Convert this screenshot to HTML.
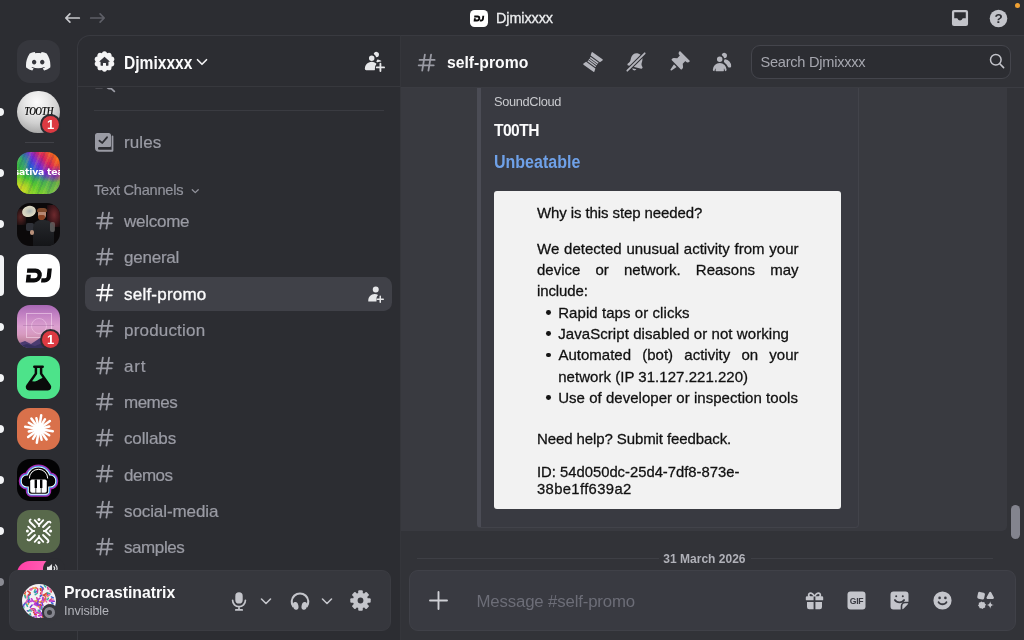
<!DOCTYPE html>
<html lang="en">
<head>
<meta charset="utf-8">
<title>Djmixxxx</title>
<style>
*{box-sizing:border-box;margin:0;padding:0}
html,body{width:1024px;height:640px;overflow:hidden;background:#2c2d32;font-family:"Liberation Sans",sans-serif;color:#dfe0e2}
.abs{position:absolute}
#app{position:relative;width:1024px;height:640px;overflow:hidden;will-change:transform}
/* title bar */
#title{position:absolute;left:0;top:0;width:1024px;height:36px}
#title .name{position:absolute;left:496px;top:0;line-height:36px;font-size:14.400px;color:#ecedef;letter-spacing:-0.080px;white-space:nowrap;-webkit-text-stroke:0.300px #ecedef}
#title .dj{position:absolute;left:470px;top:9.500px;width:17.500px;height:17px;border-radius:4.500px;background:#fff}
/* panels */
#side{position:absolute;left:77px;top:35px;width:324px;height:620px;border:1px solid #393a40;border-right:none;border-top-left-radius:13px;background:#2c2d32;overflow:hidden}
#chat{position:absolute;left:400px;top:35px;width:624px;height:605px;background:#323338;border-top:1px solid #393a40;border-left:1px solid #35363b;overflow:hidden}
#chathead{z-index:5;position:absolute;left:-1px;top:0;width:625px;height:51.500px;background:#313237;border-bottom:1px solid #3b3c42}
#sidehead{position:absolute;left:0;top:0;width:323px;height:51px;border-bottom:1px solid #37383d}
.chan{position:absolute;left:47px;font-size:17px;color:#9b9ca5;white-space:nowrap;letter-spacing:-0.1px}

/* guild list */
.pill{position:absolute;left:0;width:4px;height:8px;background:#f2f3f5;border-radius:0 4px 4px 0}
.gi{position:absolute;left:17.300px;width:42.700px;height:42.700px;border-radius:13px;overflow:hidden}
.badge{position:absolute;width:21.600px;height:21.600px;border-radius:50%;background:#2c2d32}
.badge i{position:absolute;left:2px;top:2px;width:17.600px;height:17.600px;border-radius:50%;background:#dc3a42;color:#fff;font:bold 13px/17.600px "Liberation Sans",sans-serif;text-align:center;font-style:normal}

/* sidebar */
.row{position:absolute;left:8px;width:306px;height:34px;border-radius:8.500px}
.row svg.h{position:absolute;left:8px;top:5.600px}
.row span{position:absolute;left:38px;top:1px;line-height:34px;font-size:17px;color:#9a9ba4;white-space:nowrap;-webkit-text-stroke:0.220px #9a9ba4}
.row.sel{background:#404148;box-shadow:-1px 0 0 #404148}
.row.sel span{color:#fbfbfc;-webkit-text-stroke:0.350px #fbfbfc}

/* chat */
#hover{position:absolute;left:-1px;top:51.500px;width:606.500px;height:443.500px;background:#393a40;border-radius:0 0 5px 0}
#embed{position:absolute;left:76px;top:40px;width:382px;height:451.500px;background:#393a41;border:1px solid #42434a;border-left:4.500px solid #4b4c55;border-radius:4px}
#card{position:absolute;left:93px;top:154.500px;width:347px;height:318.500px;background:#f2f2f2;border-radius:3px;color:#111;-webkit-text-stroke:0.280px #111;font-size:15px;overflow:hidden}
#card div{position:absolute;white-space:nowrap;line-height:21.330px;height:21.330px;letter-spacing:-0.100px}
#card .j{width:261.500px;left:43px;text-align:justify;text-align-last:justify;letter-spacing:0}
#card .b{left:64.200px;letter-spacing:0.070px}
#card .jb{width:240px;left:64.500px;text-align:justify;text-align-last:justify;letter-spacing:0}
#card .dot{left:52.300px;width:4.800px;height:4.800px;border-radius:50%;background:#151515}
</style>
</head>
<body>
<div id="app">
  <div id="title">
    <svg class="abs" style="left:64px;top:11px" width="17" height="14" viewBox="0 0 17 14"><path fill="none" stroke="#c8c9cd" stroke-width="1.700" stroke-linecap="round" stroke-linejoin="round" d="M15.300 7H2M5.900 2.900 1.800 7l4.100 4.100"/></svg>
    <svg class="abs" style="left:89px;top:11px" width="17" height="14" viewBox="0 0 17 14"><path fill="none" stroke="#5e5f67" stroke-width="1.700" stroke-linecap="round" stroke-linejoin="round" d="M1.700 7H15M11.100 2.900 15.200 7l-4.100 4.100"/></svg>
    <div class="dj"><svg class="abs" style="left:3px;top:5px" width="12" height="7" viewBox="-2 -1.500 30 17"><g transform="skewX(-6) translate(1.300 0)" fill="none" stroke="#0b0b0c" stroke-width="4.600"><path d="M0 2.100H8.200A4.900 4.900 0 0 1 8.200 11.900H2.100V6.300"/><path d="M22.400 0V8.300A3.600 3.600 0 0 1 18.800 11.900H15.200"/></g></svg></div>
    <div class="name">Djmixxxx</div>
    <!-- inbox -->
    <svg class="abs" style="left:951px;top:9px" width="18" height="18" viewBox="0 0 19 19"><path fill="#c3c4ca" fill-rule="evenodd" d="M3.200 1h12.600A2.200 2.200 0 0 1 18 3.200v12.600a2.200 2.200 0 0 1-2.200 2.200H3.200A2.200 2.200 0 0 1 1 15.800V3.200A2.200 2.200 0 0 1 3.200 1ZM3.400 3.400v6.400h2.900c.4 0 .7.200.8.600.3 1 1.200 1.800 2.400 1.800s2.100-.8 2.400-1.800c.1-.4.400-.6.800-.6h2.900V3.400Z"/></svg>
    <!-- help -->
    <svg class="abs" style="left:989px;top:9px" width="19" height="19" viewBox="0 0 19 19"><circle cx="9.500" cy="9.500" r="8.800" fill="#c3c4ca"/><text x="9.500" y="14.300" text-anchor="middle" font-family="Liberation Sans, sans-serif" font-weight="bold" font-size="13.500" fill="#2c2d32">?</text></svg>
    <div class="abs" style="left:1015px;top:3px;width:5px;height:5px;border-radius:50%;background:#f0a032"></div>
  </div>

  <div id="guilds">
    <!-- pills -->
    <div class="pill" style="top:108.10px"></div>
    <div class="pill" style="top:169.15px"></div>
    <div class="pill" style="top:220.30px"></div>
    <div class="pill" style="top:254.95px;height:41px"></div>
    <div class="pill" style="top:322.60px"></div>
    <div class="pill" style="top:373.75px"></div>
    <div class="pill" style="top:424.90px"></div>
    <div class="pill" style="top:476.05px"></div>
    <div class="pill" style="top:527.20px"></div>
    <div class="pill" style="top:578.35px;background:#8a8b93"></div>
    <!-- home -->
    <div class="gi" style="top:40px;background:#36373d">
      <svg class="abs" style="left:9.200px;top:9.300px" width="24.400" height="24.400" viewBox="0 0 24 24"><path fill="#f0f1f2" d="M20.317 4.3698a19.7913 19.7913 0 00-4.8851-1.5152.0741.0741 0 00-.0785.0371c-.211.3753-.4447.8648-.6083 1.2495-1.8447-.2762-3.68-.2762-5.4868 0-.1636-.3933-.4058-.8742-.6177-1.2495a.077.077 0 00-.0785-.037 19.7363 19.7363 0 00-4.8852 1.515.0699.0699 0 00-.0321.0277C.5334 9.0458-.319 13.5799.0992 18.0578a.0824.0824 0 00.0312.0561c2.0528 1.5076 4.0413 2.4228 5.9929 3.0294a.0777.0777 0 00.0842-.0276c.4616-.6304.8731-1.2952 1.226-1.9942a.076.076 0 00-.0416-.1057c-.6528-.2476-1.2743-.5495-1.8722-.8923a.077.077 0 01-.0076-.1277c.1258-.0943.2517-.1923.3718-.2914a.0743.0743 0 01.0776-.0105c3.9278 1.7933 8.18 1.7933 12.0614 0a.0739.0739 0 01.0785.0095c.1202.099.246.1981.3728.2924a.077.077 0 01-.0066.1276 12.2986 12.2986 0 01-1.873.8914.0766.0766 0 00-.0407.1067c.3604.698.7719 1.3628 1.225 1.9932a.076.076 0 00.0842.0286c1.961-.6067 3.9495-1.5219 6.0023-3.0294a.077.077 0 00.0313-.0552c.5004-5.177-.8382-9.6739-3.5485-13.6604a.061.061 0 00-.0312-.0286zM8.02 15.3312c-1.1825 0-2.1569-1.0857-2.1569-2.419 0-1.3332.9555-2.4189 2.157-2.4189 1.2108 0 2.1757 1.0952 2.1568 2.419 0 1.3332-.9555 2.4189-2.1569 2.4189zm7.9748 0c-1.1825 0-2.1569-1.0857-2.1569-2.419 0-1.3332.9554-2.4189 2.1569-2.4189 1.2108 0 2.1757 1.0952 2.1568 2.419 0 1.3332-.946 2.4189-2.1568 2.4189Z"/></svg>
    </div>
    <!-- T00TH sphere -->
    <div class="gi" style="top:90.500px;border-radius:50%;background:radial-gradient(circle at 46% 26%,#fbfbfb 0%,#e9e9e9 28%,#cfcfcf 55%,#a9a9a9 80%,#8c8c8c 100%)">
      <div class="abs" style="left:6px;top:13px;width:31px;text-align:center;font:italic bold 9.500px/14px 'Liberation Serif',serif;color:#161616;letter-spacing:-0.700px;transform:scaleY(1.3);text-shadow:0 0 1px #fff,0 0 1px #fff">TOOTH</div>
    </div>
    <div class="badge" style="left:39.800px;top:113.900px"><i>1</i></div>
    <div class="abs" style="left:25px;top:142px;width:29px;height:1px;background:#404147"></div>
    <!-- sativa -->
    <div class="gi" style="top:151.80px;background:linear-gradient(52deg,#e6d61e 0%,#9ad428 14%,#38ba3c 30%,#2a5cd8 47%,#7a2ed2 59%,#d8245e 72%,#f0601e 88%,#f08a1e 100%)">
      <div class="abs" style="left:0;top:0;width:43px;height:43px;background:linear-gradient(180deg,rgba(90,200,40,0) 48%,rgba(80,200,44,.8) 70%,rgba(140,212,40,.85) 100%)"></div>
      <div class="abs" style="left:24px;top:14px;width:19px;height:16px;background:radial-gradient(ellipse at 70% 50%,rgba(110,40,210,.75) 0%,rgba(110,40,210,0) 75%)"></div>
      <div class="abs" style="left:0;top:0;width:14px;height:20px;background:radial-gradient(ellipse at 20% 40%,rgba(60,190,70,.8) 0%,rgba(60,190,70,0) 75%)"></div>
      <div class="abs" style="left:0;top:26px;width:16px;height:17px;background:radial-gradient(ellipse at 10% 60%,rgba(236,216,30,.9) 0%,rgba(236,216,30,0) 80%)"></div>
      <div class="abs" style="left:-10px;top:-10px;width:63px;height:63px;background:repeating-linear-gradient(112deg,rgba(255,255,255,0) 0 2px,rgba(20,20,120,.13) 2px 4px,rgba(255,255,255,0) 4px 7px,rgba(255,240,80,.12) 7px 9px)"></div>
      <div class="abs" style="left:-6px;top:15.500px;width:55px;text-align:center;font:bold 8px/11px 'DejaVu Sans','Liberation Sans',sans-serif;color:#fff;white-space:nowrap;transform:scaleX(1.160);letter-spacing:-0.200px">sativa tea</div>
    </div>
    <!-- people photo -->
    <div class="gi" style="top:202.95px;background:#0b090a">
      <div class="abs" style="left:30px;top:2px;width:13px;height:22px;background:radial-gradient(ellipse at 55% 45%,#6e2a2e 0%,#3c161a 55%,rgba(11,9,10,0) 100%)"></div>
      <div class="abs" style="left:0;top:6px;width:9px;height:16px;background:radial-gradient(ellipse at 40% 50%,#5c2626 0%,rgba(11,9,10,0) 100%)"></div>
      <div class="abs" style="left:5px;top:3px;width:13.500px;height:11px;border-radius:50%;background:radial-gradient(ellipse at 55% 50%,#aab4b4 0%,#d4d2c0 45%,#e6dfc4 100%);transform:rotate(-14deg)"></div>
      <div class="abs" style="left:9px;top:20px;width:8px;height:8px;border-radius:2px;background:#5a6470;opacity:.45"></div>
      <div class="abs" style="left:16px;top:17px;width:21px;height:26px;border-radius:8px 9px 0 0;background:linear-gradient(180deg,#26282c 0%,#141518 100%)"></div>
      <div class="abs" style="left:20.500px;top:6.500px;width:8.500px;height:10px;border-radius:4px;background:#b88a74"></div>
      <div class="abs" style="left:20px;top:5px;width:9.500px;height:4.500px;border-radius:5px 5px 1px 1px;background:#7e4a2c"></div>
      <div class="abs" style="left:21px;top:12.500px;width:7px;height:5px;border-radius:2px 2px 4px 4px;background:#8a4424"></div>
      <div class="abs" style="left:12.500px;top:27.500px;width:4.500px;height:5px;border-radius:2.500px;background:#b8907a"></div>
      <div class="abs" style="left:33px;top:19px;width:5px;height:10px;border-radius:2px;background:#7c7a78;opacity:.6"></div>
    </div>
    <!-- DJ -->
    <div class="gi" style="top:254.10px;background:#fff">
      <svg class="abs" style="left:7px;top:13px" width="30" height="17" viewBox="-2 -1.500 30 17"><g transform="skewX(-6) translate(1.300 0)" fill="none" stroke="#0b0b0c" stroke-width="4.300"><path d="M0 2.100H8.200A4.900 4.900 0 0 1 8.200 11.900H2.100V6.300"/><path d="M22.400 0V8.300A3.600 3.600 0 0 1 18.800 11.900H15.200"/></g></svg>
    </div>
    <!-- pink album -->
    <div class="gi" style="top:305.25px;background:linear-gradient(180deg,#a868b4 0%,#c584c4 25%,#dba0cf 50%,#d79ac0 68%,#c88aa8 80%,#8a6a98 100%)">
      <div class="abs" style="left:9px;top:8px;width:26px;height:25px;border:1px solid rgba(255,230,248,.5)"></div>
      <div class="abs" style="left:14px;top:13px;width:16px;height:16px;border-radius:50%;border:1px solid rgba(255,230,248,.4)"></div>
      <div class="abs" style="left:6px;top:19.500px;width:31px;height:1.500px;background:rgba(110,70,120,.22)"></div>
      <svg class="abs" style="left:0;top:30px" width="43" height="13" viewBox="0 0 43 13"><path fill="#4a3b70" d="M0 9 8 6l6 3 9-6 7 4 5-2 8 3v6H0Z"/><path fill="#35305c" d="M0 12l10-3 8 2 10-4 15 5v1H0Z"/></svg>
    </div>
    <div class="badge" style="left:39.800px;top:328.800px"><i>1</i></div>
    <!-- flask -->
    <div class="gi" style="top:356.40px;background:#4de38a">
      <svg class="abs" style="left:8px;top:8.500px" width="27" height="26" viewBox="0 0 27 26"><path fill="none" stroke="#0a0a0a" stroke-width="2.500" stroke-linecap="round" stroke-linejoin="round" d="M9.300 1.800h8.400M10.900 2.300v6.300L2.400 20.800c-1 1.500 0 3.400 1.800 3.400h18.600c1.800 0 2.800-1.900 1.800-3.400L16.100 8.600V2.300"/><path fill="#0a0a0a" d="M5.600 15.800c2.600.9 4.700 1 7-.2 2.200-1.100 4.100-2.600 6.300-3l5.300 8.300c.8 1.300 0 3-1.500 3H4.300c-1.500 0-2.300-1.700-1.500-3Z"/></svg>
    </div>
    <!-- orange burst -->
    <div class="gi" style="top:407.55px;background:#d9714b">
      <svg class="abs" style="left:5.500px;top:5.500px" width="32" height="32" viewBox="-16 -16 32 32"><g stroke="#fff" stroke-width="2.500" stroke-linecap="round"><line x1="0" y1="0" x2="2.2" y2="-13.8"/><line x1="0" y1="0" x2="6.0" y2="-9.8"/><line x1="0" y1="0" x2="10.9" y2="-7.9"/><line x1="0" y1="0" x2="10.2" y2="-2.5"/><line x1="0" y1="0" x2="13.8" y2="2.2"/><line x1="0" y1="0" x2="10.2" y2="6.3"/><line x1="0" y1="0" x2="7.6" y2="10.5"/><line x1="0" y1="0" x2="2.6" y2="10.7"/><line x1="0" y1="0" x2="-2.2" y2="13.8"/><line x1="0" y1="0" x2="-6.0" y2="9.8"/><line x1="0" y1="0" x2="-10.9" y2="7.9"/><line x1="0" y1="0" x2="-10.2" y2="2.5"/><line x1="0" y1="0" x2="-13.8" y2="-2.2"/><line x1="0" y1="0" x2="-10.2" y2="-6.3"/><line x1="0" y1="0" x2="-7.6" y2="-10.5"/><line x1="0" y1="0" x2="-2.6" y2="-10.7"/></g><circle r="4" fill="#fff"/></svg>
    </div>
    <!-- headphones piano -->
    <div class="gi" style="top:458.70px;background:#030304">
      <svg class="abs" style="left:0;top:0" width="43" height="43" viewBox="0 0 43 43">
        <g fill="none" stroke="#c832d2" stroke-width="6" stroke-linejoin="round" opacity=".85"><path d="M10.500 24V19.500a11 11 0 0 1 22 0V24Z"/><rect x="4.800" y="16.500" width="33.400" height="11" rx="5"/><rect x="11.800" y="20" width="19.400" height="14.800" rx="2.500"/></g>
        <g fill="none" stroke="#46a4f4" stroke-width="3.600" stroke-linejoin="round"><path d="M10.500 24V19.500a11 11 0 0 1 22 0V24Z"/><rect x="4.800" y="16.500" width="33.400" height="11" rx="5"/><rect x="11.800" y="20" width="19.400" height="14.800" rx="2.500"/></g>
        <g fill="none" stroke="#fff" stroke-width="1.700" stroke-linejoin="round"><path d="M10.500 24V19.500a11 11 0 0 1 22 0V24Z"/><rect x="4.800" y="16.500" width="33.400" height="11" rx="5"/><rect x="11.800" y="20" width="19.400" height="14.800" rx="2.500"/></g>
        <g fill="#030304"><path d="M10.500 24V19.500a11 11 0 0 1 22 0V24Z"/><rect x="4.800" y="16.500" width="33.400" height="11" rx="5"/><rect x="11.800" y="20" width="19.400" height="14.800" rx="2.500"/></g>
        <path d="M12.300 19.500a9.200 9.200 0 0 1 18.400 0" fill="none" stroke="#fff" stroke-width="1"/>
        <rect x="13.200" y="20.500" width="16.600" height="13.200" rx="1.800" fill="#fff"/>
        <rect x="17.600" y="20.500" width="2.400" height="8.500" fill="#030304"/><rect x="23" y="20.500" width="2.400" height="8.500" fill="#030304"/>
        <rect x="18.500" y="28.500" width=".7" height="5.500" fill="#030304"/><rect x="23.800" y="28.500" width=".7" height="5.500" fill="#030304"/>
      </svg>
    </div>
    <!-- green snow -->
    <div class="gi" style="top:509.85px;background:#58694b">
      <svg class="abs" style="left:6.500px;top:6.500px" width="30" height="30" viewBox="-15 -15 30 30"><g fill="none" stroke="#fff" stroke-width="1.800" stroke-linecap="round" stroke-linejoin="round">
        <g><path d="M-4.300-10.800 0-6.200 4.300-10.800M0-6.200V-4.800"/><circle cx="0" cy="-11.600" r="1.500" fill="#fff" stroke="none"/></g>
        <g transform="rotate(90)"><path d="M-4.300-10.800 0-6.200 4.300-10.800M0-6.200V-4.800"/><circle cx="0" cy="-11.600" r="1.500" fill="#fff" stroke="none"/></g><g transform="rotate(180)"><path d="M-4.300-10.800 0-6.200 4.300-10.800M0-6.200V-4.800"/><circle cx="0" cy="-11.600" r="1.500" fill="#fff" stroke="none"/></g><g transform="rotate(270)"><path d="M-4.300-10.800 0-6.200 4.300-10.800M0-6.200V-4.800"/><circle cx="0" cy="-11.600" r="1.500" fill="#fff" stroke="none"/></g>
        <g><path d="M4-4 9-9M9-9c.8-.8 2.200-.5 2.500.6"/></g>
        <g transform="rotate(90)"><path d="M4-4 9-9M9-9c.8-.8 2.200-.5 2.500.6"/></g><g transform="rotate(180)"><path d="M4-4 9-9M9-9c.8-.8 2.200-.5 2.500.6"/></g><g transform="rotate(270)"><path d="M4-4 9-9M9-9c.8-.8 2.200-.5 2.500.6"/></g>
      </g></svg>
    </div>
    <!-- last partial pink -->
    <div class="gi" style="top:561.00px;background:linear-gradient(100deg,#ff3ea6 0%,#ff58b0 50%,#ff8fc0 100%)"></div>
    <div class="abs" style="left:43px;top:557.500px;width:22px;height:22px;border-radius:11px;background:#2c2d32"></div>
    <svg class="abs" style="left:46px;top:563px" width="13" height="11" viewBox="0 0 14 12"><path fill="#e3e4e6" d="M1 4h2.200L6.500 1v10L3.200 8H1Z"/><path fill="none" stroke="#e3e4e6" stroke-width="1.300" stroke-linecap="round" d="M8.500 4a3 3 0 0 1 0 4M10.300 2a5.500 5.500 0 0 1 0 8"/></svg>
  </div>
  <div id="side">

    <div id="sidehead">
      <svg class="abs" style="left:16px;top:15px" width="21" height="21" viewBox="0 0 24 24"><g fill="#f4f4f5"><circle cx="12" cy="12" r="9.900"/><circle cx="20.27" cy="14.69" r="2.900"/><circle cx="17.11" cy="19.04" r="2.900"/><circle cx="12.00" cy="20.70" r="2.900"/><circle cx="6.89" cy="19.04" r="2.900"/><circle cx="3.73" cy="14.69" r="2.900"/><circle cx="3.73" cy="9.31" r="2.900"/><circle cx="6.89" cy="4.96" r="2.900"/><circle cx="12.00" cy="3.30" r="2.900"/><circle cx="17.11" cy="4.96" r="2.900"/><circle cx="20.27" cy="9.31" r="2.900"/></g><path fill="#34353b" d="M12 6.600 6.300 11.700c-.300.300-.100.700.300.700h.900v4c0 .300.200.500.500.500h2.300v-2.700c0-.300.200-.500.500-.500h2.400c.300 0 .500.200.500.500v2.700h2.300c.300 0 .500-.2.500-.500v-4h.900c.400 0 .600-.400.300-.700Z"/></svg>
      <div class="abs" style="left:46px;top:1.500px;line-height:51px;font-size:17.600px;font-weight:bold;color:#fbfbfc;white-space:nowrap;transform:scaleX(.885);transform-origin:0 50%">Djmixxxx</div>
      <svg class="abs" style="left:118px;top:20.700px" width="12" height="10.500" viewBox="0 0 12 10"><path fill="none" stroke="#f0f0f2" stroke-width="1.700" stroke-linecap="round" stroke-linejoin="round" d="M1.500 2.500 6 7l4.500-4.500"/></svg>
      <svg class="abs" style="left:285px;top:14px" width="22" height="22" viewBox="0 0 24 24"><path fill="#e6e7e9" d="M14.500 8a3 3 0 1 0-2.700-4.300c-.2.400.06.860.44 1.120a5 5 0 0 1 2.140 3.080c.1.050.6.100.12.100ZM16.620 13.170c-.22.290-.59.400-.93.270a7.500 7.500 0 0 0-.73-.230c-.33-.08-.5-.47-.3-.75a5 5 0 0 0 .8-1.710c.08-.3.340-.54.650-.5a7.500 7.500 0 0 1 3.700 1.450c.28.200.23.600-.05.800a6.500 6.500 0 0 0-3.140.67ZM12.500 9a3 3 0 1 1-6 0 3 3 0 0 1 6 0ZM2 20.500a7.500 7.500 0 0 1 12.400-5.660c.2.180.2.480.05.700A6.500 6.500 0 0 0 13 19.500V21.500a.5.500 0 0 1-.5.500H3.500C2.670 22 2 21.330 2 20.500Z"/><path fill="#e6e7e9" d="M19 14a1 1 0 0 1 1 1v3h3a1 1 0 1 1 0 2h-3v3a1 1 0 1 1-2 0v-3h-3a1 1 0 1 1 0-2h3v-3a1 1 0 0 1 1-1Z"/></svg>
    </div>
    <!-- cut-off row fragment -->
    <svg class="abs" style="left:17px;top:52px" width="22" height="4.800" viewBox="0 1.400 22 4.800"><path fill="none" stroke="#9a9ba4" stroke-width="1.800" stroke-linecap="round" d="M1 .8h6M12 .5c1 1.300 2.600 1.800 4 1.300l3.300 3"/></svg>
    <div class="abs" style="left:16px;top:74px;width:290px;height:1px;background:#3a3b41"></div>
    <!-- rules -->
    <div class="row" style="top:89px">
      <svg class="abs" style="left:9px;top:8px" width="19" height="19" viewBox="0 0 19 19"><path fill="#9a9ba4" fill-rule="evenodd" d="M2.500 0h11A2.500 2.500 0 0 1 16 2.500V13a1 1 0 0 1-1 1H4.300a1.400 1.400 0 0 0 0 2.800H16.600V3.500a.9.900 0 0 1 1.800 0V17.500a1.200 1.200 0 0 1-1.200 1.200H4A4 4 0 0 1 0 14.700V2.500A2.500 2.500 0 0 1 2.500 0ZM12.600 3.600a.9.900 0 0 1 .1 1.300l-4.800 5.600a.9.900 0 0 1-1.300.1L3.900 8.400a.9.900 0 0 1 1.200-1.400l2 1.700 4.200-4.900a.9.900 0 0 1 1.300-.2Z"/></svg>
      <span style="letter-spacing:0.1px">rules</span>
    </div>
    <div class="abs" style="left:16px;top:143px;line-height:22px;font-size:14.600px;color:#92939c;-webkit-text-stroke:0.200px #92939c;white-space:nowrap;letter-spacing:-0.250px">Text Channels</div>
    <svg class="abs" style="left:112.500px;top:151.500px" width="8.500" height="6.800" viewBox="0 0 10 8"><path fill="none" stroke="#92939c" stroke-width="1.500" stroke-linecap="round" stroke-linejoin="round" d="M1.500 2 5 5.500 8.500 2"/></svg>
<div class="row" style="top:168.2px"><svg class="h" width="21.300" height="21.300" viewBox="0 0 24 24"><path fill="#9a9ba4" fill-rule="evenodd" d="M10.99 3.16A1 1 0 1 0 9 2.84L8.15 8H4a1 1 0 0 0 0 2h3.82l-.67 4H3a1 1 0 1 0 0 2h3.82l-.8 4.84a1 1 0 0 0 1.97.32L8.850 16h4.970l-.8 4.840a1 1 0 0 0 1.970.320l.860-5.160H20a1 1 0 1 0 0-2h-3.820l.670-4H21a1 1 0 1 0 0-2h-3.820l.8-4.840a1 1 0 1 0-1.970-.320L15.150 8h-4.970l.8-4.840ZM14.150 14l.670-4H9.850l-.670 4h4.970Z"/></svg><span style="letter-spacing:-0.25px">welcome</span></div>
    <div class="row" style="top:204.4px"><svg class="h" width="21.300" height="21.300" viewBox="0 0 24 24"><path fill="#9a9ba4" fill-rule="evenodd" d="M10.99 3.16A1 1 0 1 0 9 2.84L8.15 8H4a1 1 0 0 0 0 2h3.82l-.67 4H3a1 1 0 1 0 0 2h3.82l-.8 4.84a1 1 0 0 0 1.97.32L8.850 16h4.970l-.8 4.840a1 1 0 0 0 1.970.320l.860-5.160H20a1 1 0 1 0 0-2h-3.820l.670-4H21a1 1 0 1 0 0-2h-3.820l.8-4.840a1 1 0 1 0-1.970-.320L15.150 8h-4.970l.8-4.840ZM14.150 14l.670-4H9.850l-.670 4h4.970Z"/></svg><span style="letter-spacing:-0.23px">general</span></div>
    <div class="row sel" style="top:240.6px"><svg class="h" width="21.300" height="21.300" viewBox="0 0 24 24"><path fill="#fbfbfc" fill-rule="evenodd" d="M10.99 3.16A1 1 0 1 0 9 2.84L8.15 8H4a1 1 0 0 0 0 2h3.82l-.67 4H3a1 1 0 1 0 0 2h3.82l-.8 4.84a1 1 0 0 0 1.97.32L8.850 16h4.970l-.8 4.840a1 1 0 0 0 1.970.320l.860-5.160H20a1 1 0 1 0 0-2h-3.820l.670-4H21a1 1 0 1 0 0-2h-3.820l.8-4.840a1 1 0 1 0-1.970-.320L15.150 8h-4.970l.8-4.840ZM14.150 14l.670-4H9.850l-.670 4h4.970Z"/></svg><span style="letter-spacing:0.22px">self-promo</span><svg class="abs" style="left:280px;top:8px" width="18" height="18" viewBox="0 0 24 24"><path fill="#e6e7e9" d="M13 10a4 4 0 1 0 0-8 4 4 0 0 0 0 8ZM3 21c0-5 3.500-9 8.500-9 1.800 0 3.400.500 4.700 1.400-1.300 1-2.200 2.600-2.200 4.600v3.500a.5.500 0 0 1-.5.500H3.500a.5.500 0 0 1-.5-.5V21Z"/><path fill="#e6e7e9" d="M19 14a1 1 0 0 1 1 1v3h3a1 1 0 1 1 0 2h-3v3a1 1 0 1 1-2 0v-3h-3a1 1 0 1 1 0-2h3v-3a1 1 0 0 1 1-1Z"/></svg></div>
    <div class="row" style="top:276.8px"><svg class="h" width="21.300" height="21.300" viewBox="0 0 24 24"><path fill="#9a9ba4" fill-rule="evenodd" d="M10.99 3.16A1 1 0 1 0 9 2.84L8.15 8H4a1 1 0 0 0 0 2h3.82l-.67 4H3a1 1 0 1 0 0 2h3.82l-.8 4.84a1 1 0 0 0 1.97.32L8.850 16h4.970l-.8 4.840a1 1 0 0 0 1.970.320l.860-5.160H20a1 1 0 1 0 0-2h-3.820l.670-4H21a1 1 0 1 0 0-2h-3.820l.8-4.840a1 1 0 1 0-1.970-.320L15.150 8h-4.970l.8-4.840ZM14.150 14l.670-4H9.850l-.670 4h4.970Z"/></svg><span style="letter-spacing:0.19px">production</span></div>
    <div class="row" style="top:313.0px"><svg class="h" width="21.300" height="21.300" viewBox="0 0 24 24"><path fill="#9a9ba4" fill-rule="evenodd" d="M10.99 3.16A1 1 0 1 0 9 2.84L8.15 8H4a1 1 0 0 0 0 2h3.82l-.67 4H3a1 1 0 1 0 0 2h3.82l-.8 4.84a1 1 0 0 0 1.97.32L8.850 16h4.970l-.8 4.840a1 1 0 0 0 1.970.320l.860-5.160H20a1 1 0 1 0 0-2h-3.820l.670-4H21a1 1 0 1 0 0-2h-3.820l.8-4.840a1 1 0 1 0-1.970-.320L15.150 8h-4.970l.8-4.840ZM14.150 14l.670-4H9.850l-.670 4h4.970Z"/></svg><span style="letter-spacing:0.8px">art</span></div>
    <div class="row" style="top:349.2px"><svg class="h" width="21.300" height="21.300" viewBox="0 0 24 24"><path fill="#9a9ba4" fill-rule="evenodd" d="M10.99 3.16A1 1 0 1 0 9 2.84L8.15 8H4a1 1 0 0 0 0 2h3.82l-.67 4H3a1 1 0 1 0 0 2h3.82l-.8 4.84a1 1 0 0 0 1.97.32L8.850 16h4.970l-.8 4.840a1 1 0 0 0 1.970.320l.860-5.160H20a1 1 0 1 0 0-2h-3.820l.670-4H21a1 1 0 1 0 0-2h-3.820l.8-4.840a1 1 0 1 0-1.970-.320L15.150 8h-4.970l.8-4.840ZM14.150 14l.670-4H9.850l-.670 4h4.970Z"/></svg><span style="letter-spacing:-0.5px">memes</span></div>
    <div class="row" style="top:385.4px"><svg class="h" width="21.300" height="21.300" viewBox="0 0 24 24"><path fill="#9a9ba4" fill-rule="evenodd" d="M10.99 3.16A1 1 0 1 0 9 2.84L8.15 8H4a1 1 0 0 0 0 2h3.82l-.67 4H3a1 1 0 1 0 0 2h3.82l-.8 4.84a1 1 0 0 0 1.97.32L8.850 16h4.970l-.8 4.840a1 1 0 0 0 1.970.320l.860-5.160H20a1 1 0 1 0 0-2h-3.820l.670-4H21a1 1 0 1 0 0-2h-3.820l.8-4.840a1 1 0 1 0-1.970-.320L15.150 8h-4.970l.8-4.840ZM14.150 14l.670-4H9.850l-.670 4h4.970Z"/></svg><span style="letter-spacing:-0.13px">collabs</span></div>
    <div class="row" style="top:421.6px"><svg class="h" width="21.300" height="21.300" viewBox="0 0 24 24"><path fill="#9a9ba4" fill-rule="evenodd" d="M10.99 3.16A1 1 0 1 0 9 2.84L8.15 8H4a1 1 0 0 0 0 2h3.82l-.67 4H3a1 1 0 1 0 0 2h3.82l-.8 4.84a1 1 0 0 0 1.97.32L8.850 16h4.970l-.8 4.840a1 1 0 0 0 1.970.320l.860-5.160H20a1 1 0 1 0 0-2h-3.820l.670-4H21a1 1 0 1 0 0-2h-3.820l.8-4.840a1 1 0 1 0-1.970-.320L15.150 8h-4.970l.8-4.840ZM14.150 14l.670-4H9.850l-.670 4h4.970Z"/></svg><span style="letter-spacing:-0.5px">demos</span></div>
    <div class="row" style="top:457.8px"><svg class="h" width="21.300" height="21.300" viewBox="0 0 24 24"><path fill="#9a9ba4" fill-rule="evenodd" d="M10.99 3.16A1 1 0 1 0 9 2.84L8.15 8H4a1 1 0 0 0 0 2h3.82l-.67 4H3a1 1 0 1 0 0 2h3.82l-.8 4.84a1 1 0 0 0 1.97.32L8.850 16h4.970l-.8 4.840a1 1 0 0 0 1.970.320l.860-5.160H20a1 1 0 1 0 0-2h-3.820l.670-4H21a1 1 0 1 0 0-2h-3.820l.8-4.840a1 1 0 1 0-1.970-.320L15.150 8h-4.970l.8-4.840ZM14.150 14l.670-4H9.850l-.670 4h4.970Z"/></svg><span style="letter-spacing:-0.09px">social-media</span></div>
    <div class="row" style="top:494.0px"><svg class="h" width="21.300" height="21.300" viewBox="0 0 24 24"><path fill="#9a9ba4" fill-rule="evenodd" d="M10.99 3.16A1 1 0 1 0 9 2.84L8.15 8H4a1 1 0 0 0 0 2h3.82l-.67 4H3a1 1 0 1 0 0 2h3.82l-.8 4.84a1 1 0 0 0 1.97.32L8.850 16h4.970l-.8 4.840a1 1 0 0 0 1.970.320l.860-5.160H20a1 1 0 1 0 0-2h-3.820l.670-4H21a1 1 0 1 0 0-2h-3.820l.8-4.840a1 1 0 1 0-1.970-.320L15.150 8h-4.970l.8-4.840ZM14.150 14l.670-4H9.850l-.670 4h4.970Z"/></svg><span style="letter-spacing:-0.42px">samples</span></div>
  </div>

  <!-- user panel -->
  <div class="abs" style="left:8.500px;top:569.500px;width:382.500px;height:61.500px;border-radius:9px;background:#36373d;border:1px solid #3b3c42"></div>
  <div class="abs" id="avatar" style="left:21.500px;top:583.500px;width:34.500px;height:34.500px;border-radius:50%;background:#f4f1f4;overflow:hidden">
    <svg width="35" height="35" viewBox="0 0 35 35"><g fill="none" stroke-width="1.500" stroke-linecap="round"><path stroke="#d83a8a" d="M15.7 5.7l-0.4 3.0M14.8 13.7l1.0 3.0M13.7 3.5l2.1 1.6M23.7 13.8l0.1 1.7M25.7 3.3l0.5 1.9M29.7 14.8l-2.4 1.8M15.5 28.7l2.7 0.7M17.4 21.3l-1.9 0.5M9.6 24.7l2.4 0.1M15.5 19.2l-1.8 1.6M18.9 24.3l2.1 1.5M11.0 4.3l-3.0 1.1M22.1 27.7l2.5 0.6M19.5 10.4l-1.3 1.6M19.6 17.0l-1.1 1.7"/><path stroke="#e8a03a" d="M7.1 17.9l-1.1 2.6M22.6 14.4l-0.5 3.1M24.4 11.4l1.5 1.4M19.6 4.6l1.9 0.7M31.0 16.5l-2.2 0.1M22.0 16.9l-1.4 1.6M27.2 31.2l1.2 2.4M21.6 13.6l-0.7 2.5M11.2 3.9l3.1 0.2M16.3 22.5l2.2 1.7M24.9 9.1l0.0 2.4M21.0 4.1l-1.7 1.3M24.1 26.1l-1.6 0.1M19.2 17.8l-2.5 0.3M15.2 16.8l-2.0 0.2M3.0 9.9l0.6 2.5M12.2 17.3l2.7 1.2"/><path stroke="#3a6ad8" d="M20.6 14.1l0.4 2.8M33.9 20.9l-0.4 1.6M5.6 15.9l1.4 2.4M3.5 19.0l-2.1 2.2M19.8 11.2l-1.3 1.0M14.4 7.3l-1.5 1.3M18.7 2.2l2.2 1.9M15.5 19.4l-2.2 1.3M29.5 18.6l1.5 1.2M29.4 12.8l1.9 1.0M8.3 10.2l-2.2 2.1"/><path stroke="#7a3ad8" d="M15.9 19.5l-2.3 0.6M21.6 28.4l1.6 0.3M20.8 26.7l1.3 2.2M12.0 32.8l-1.3 1.2M16.3 17.1l-1.0 1.6M31.0 28.0l1.3 1.3M19.5 29.1l-0.7 1.9M7.6 15.2l-2.5 1.8M18.7 22.1l0.7 1.6M32.2 17.3l-1.7 0.3M5.3 26.7l1.9 0.1M1.8 21.9l-2.2 1.3M20.9 30.4l2.3 1.6M4.8 17.7l-1.7 1.7M15.2 20.8l2.7 0.1M7.0 16.0l-1.5 1.6M19.8 18.6l1.1 3.0M25.4 9.5l0.5 1.6M31.9 24.9l0.3 3.2M20.9 4.8l-0.9 2.2M10.1 21.1l-1.8 2.1M21.9 25.9l1.7 1.1M19.2 21.8l0.9 2.2M17.3 26.2l1.5 2.6M18.5 33.7l0.3 1.9"/><path stroke="#d8443a" d="M19.7 7.6l-1.1 1.8M8.0 9.5l-1.6 1.4M28.5 5.5l0.9 2.4M24.3 9.5l-2.2 1.3M20.5 31.5l0.2 2.2M22.8 15.6l-2.0 0.7M12.6 30.6l1.7 0.2M11.6 28.3l1.7 2.0M21.1 11.0l2.2 1.1M18.3 4.6l0.4 1.6M5.8 7.1l2.4 1.8M19.8 7.3l-0.6 2.1M18.9 20.7l0.5 2.3M18.4 20.7l0.8 1.9M13.0 25.5l-1.5 1.0M3.5 8.0l-0.8 1.5"/><path stroke="#3ab0a0" d="M6.8 13.2l-0.4 1.8M13.1 5.7l-0.8 2.3M19.2 22.5l-0.0 2.9M8.0 30.7l-3.2 0.2M8.2 29.6l0.4 1.6M8.7 25.4l-2.5 1.7M4.2 19.8l1.3 2.6M16.2 26.2l1.2 2.0M26.3 14.4l-1.1 1.3M22.4 1.4l1.4 1.5M2.7 11.4l0.8 2.4M25.2 8.9l2.8 1.1M15.0 9.5l-1.8 1.2M10.6 26.0l-1.6 1.0M1.8 23.3l-0.8 2.8"/><path stroke="#e86aa8" d="M27.5 11.0l-1.8 0.7M28.1 4.7l0.3 3.1M14.0 27.1l-1.7 0.5M5.3 16.0l-1.2 2.8M18.3 28.8l-0.4 2.1M19.9 7.6l-0.3 2.4M31.7 16.1l-2.8 0.7M29.1 21.6l-1.7 2.1M8.9 25.0l1.2 1.3M27.5 24.3l-2.4 1.1M10.2 4.8l-1.3 1.3M5.4 11.9l-0.3 2.2M8.7 32.2l-1.1 1.9M26.5 20.3l-0.9 2.1M23.0 16.0l1.7 1.9M20.2 16.2l1.3 2.1"/><path stroke="#c23ad0" d="M18.1 22.1l0.0 2.7M20.8 13.3l0.5 3.1M18.2 31.7l-1.8 0.1M9.5 14.7l1.6 2.7M13.7 20.2l1.0 1.5M13.6 18.2l-1.4 2.4M7.6 16.7l1.4 0.9M23.7 31.2l0.3 3.2M18.0 14.2l-2.0 1.5M9.9 16.6l2.1 0.9M27.5 16.9l2.8 0.2M13.8 32.0l1.1 3.0M15.8 28.1l-2.5 1.4M12.8 25.0l0.7 1.6M19.8 31.3l-3.0 0.6"/></g></svg>
  </div>
  <div class="abs" style="left:41.500px;top:604px;width:16.500px;height:16.500px;border-radius:50%;background:#36373d"></div>
  <div class="abs" style="left:44.200px;top:606.700px;width:11.200px;height:11.200px;border-radius:50%;border:3.200px solid #85868f"></div>
  <div class="abs" style="left:64px;top:581px;line-height:22px;font-size:16.500px;font-weight:bold;color:#fbfbfc;white-space:nowrap;transform:scaleX(.955);transform-origin:0 50%">Procrastinatrix</div>
  <div class="abs" style="left:64px;top:602.500px;line-height:16px;font-size:12.600px;color:#b3b4bb;white-space:nowrap;letter-spacing:-0.050px">Invisible</div>
  <!-- mic -->
  <svg class="abs" style="left:229px;top:590.500px" width="20" height="20" viewBox="0 0 20 20"><rect x="6.300" y="1.200" width="7.400" height="11.400" rx="3.700" fill="#c4c5cb"/><path fill="none" stroke="#c4c5cb" stroke-width="1.700" stroke-linecap="round" d="M3.600 9.300a6.400 6.400 0 0 0 12.800 0M10 15.800v3M6.800 18.900h6.400"/></svg>
  <svg class="abs" style="left:260px;top:597px" width="12" height="9" viewBox="0 0 12 9"><path fill="none" stroke="#c4c5cb" stroke-width="1.600" stroke-linecap="round" stroke-linejoin="round" d="M1.500 2 6 6.500 10.500 2"/></svg>
  <!-- headphones -->
  <svg class="abs" style="left:289.500px;top:590.500px" width="20" height="20" viewBox="0 0 20 20"><path fill="none" stroke="#c4c5cb" stroke-width="2.100" d="M3.400 15.800A8.300 8.300 0 1 1 16.600 15.800"/><ellipse cx="5.700" cy="14.900" rx="2.700" ry="3.900" transform="rotate(-14 5.700 14.900)" fill="#c4c5cb"/><ellipse cx="14.300" cy="14.900" rx="2.700" ry="3.900" transform="rotate(14 14.300 14.900)" fill="#c4c5cb"/></svg>
  <svg class="abs" style="left:320.500px;top:597px" width="12" height="9" viewBox="0 0 12 9"><path fill="none" stroke="#c4c5cb" stroke-width="1.600" stroke-linecap="round" stroke-linejoin="round" d="M1.500 2 6 6.500 10.500 2"/></svg>
  <!-- gear -->
  <svg class="abs" style="left:350px;top:590px" width="21" height="21" viewBox="-10.500 -10.500 21 21"><g fill="#c4c5cb"><g><rect x="-2.300" y="-10.200" width="4.600" height="5" rx="1"/></g><g transform="rotate(45)"><rect x="-2.300" y="-10.200" width="4.600" height="5" rx="1"/></g><g transform="rotate(90)"><rect x="-2.300" y="-10.200" width="4.600" height="5" rx="1"/></g><g transform="rotate(135)"><rect x="-2.300" y="-10.200" width="4.600" height="5" rx="1"/></g><g transform="rotate(180)"><rect x="-2.300" y="-10.200" width="4.600" height="5" rx="1"/></g><g transform="rotate(225)"><rect x="-2.300" y="-10.200" width="4.600" height="5" rx="1"/></g><g transform="rotate(270)"><rect x="-2.300" y="-10.200" width="4.600" height="5" rx="1"/></g><g transform="rotate(315)"><rect x="-2.300" y="-10.200" width="4.600" height="5" rx="1"/></g></g><circle r="5.300" fill="none" stroke="#c4c5cb" stroke-width="4.800"/></svg>
  <div id="chat">
    <div id="chathead">
      <svg class="abs" style="left:16px;top:15.500px" width="21.300" height="21.300" viewBox="0 0 24 24"><path fill="#9a9ba4" fill-rule="evenodd" d="M10.99 3.16A1 1 0 1 0 9 2.84L8.15 8H4a1 1 0 0 0 0 2h3.82l-.67 4H3a1 1 0 1 0 0 2h3.82l-.8 4.84a1 1 0 0 0 1.97.32L8.850 16h4.970l-.8 4.840a1 1 0 0 0 1.970.320l.860-5.160H20a1 1 0 1 0 0-2h-3.820l.670-4H21a1 1 0 1 0 0-2h-3.820l.8-4.840a1 1 0 1 0-1.970-.320L15.150 8h-4.970l.8-4.840ZM14.150 14l.670-4H9.850l-.670 4h4.970Z"/></svg>
      <div class="abs" style="left:47px;top:0.500px;line-height:52px;font-size:17px;font-weight:bold;color:#fbfbfc;white-space:nowrap;transform:scaleX(.925);transform-origin:0 50%">self-promo</div>
      <!-- threads -->
      <svg class="abs" style="left:182px;top:15px" width="22" height="22" viewBox="0 0 24 24"><g transform="rotate(36 12 12) translate(12 12) scale(.9) translate(-12 -12)" fill="#b4b5bc"><path d="M4.600 2.600h14.800a.8.800 0 0 1 .75 1.050l-1 3.200a.8.800 0 0 1-.75.550H5.600a.8.800 0 0 1-.75-.550l-1-3.200A.8.800 0 0 1 4.600 2.600ZM4.600 21.400h14.800a.8.800 0 0 0 .75-1.050l-1-3.200a.8.800 0 0 0-.75-.550H5.600a.8.800 0 0 0-.75.550l-1 3.200a.8.800 0 0 0 .75 1.050Z"/><rect x="6" y="8.700" width="12" height="1.650" rx=".3"/><rect x="6" y="11.200" width="12" height="1.650" rx=".3"/><rect x="6" y="13.700" width="12" height="1.650" rx=".3"/></g></svg>
      <!-- muted bell -->
      <svg class="abs" style="left:224.500px;top:15px" width="22" height="22" viewBox="0 0 24 24"><path transform="rotate(14 12 12)" fill="#b4b5bc" d="M12 2.500c-3.600 0-6.300 2.800-6.300 6.400v3.300c0 .9-.4 1.800-1 2.500l-.9 1c-.7.800-.1 2 1 2h14.400c1.100 0 1.700-1.200 1-2l-.9-1c-.6-.7-1-1.600-1-2.500V8.900c0-3.600-2.700-6.400-6.300-6.400ZM9.600 19.600c.4 1.100 1.300 1.800 2.400 1.800s2-.7 2.400-1.800Z"/><path stroke="#313237" stroke-width="4.200" stroke-linecap="round" d="M21.500 2.500 2.500 21.500"/><path stroke="#b4b5bc" stroke-width="1.900" stroke-linecap="round" d="M21.500 2.500 2.500 21.500"/></svg>
      <!-- pin -->
      <svg class="abs" style="left:268px;top:15px" width="22" height="22" viewBox="0 0 24 24"><path fill="#b4b5bc" d="M19.380 11.380a3 3 0 0 0 4.240 0l.030-.030a.5.500 0 0 0 0-.7L13.350.350a.5.500 0 0 0-.7 0l-.030.030a3 3 0 0 0 0 4.240L13 5l-2.920 2.920-3.650-.340a2 2 0 0 0-1.600.580l-.620.630a1 1 0 0 0 0 1.420l9.580 9.580a1 1 0 0 0 1.420 0l.630-.630a2 2 0 0 0 .580-1.600l-.340-3.640L19 11l.380.380ZM9.070 17.070a.5.500 0 0 1-.080.770l-5.150 3.430a.5.500 0 0 1-.630-.060l-.420-.420a.5.500 0 0 1-.060-.630L6.160 15a.5.500 0 0 1 .770-.080l2.140 2.140Z"/></svg>
      <!-- members -->
      <svg class="abs" style="left:311px;top:15px" width="22" height="22" viewBox="0 0 24 24"><path fill="#b4b5bc" d="M14.500 8a3 3 0 1 0-2.700-4.300c-.2.400.06.860.44 1.120a5 5 0 0 1 2.140 3.080c.1.050.6.100.12.100ZM18.440 17.270c.15.430.54.730 1 .730h1.060c.83 0 1.500-.67 1.500-1.500a7.500 7.500 0 0 0-6.500-7.430c-.55-.08-.99.380-1.100.92-.06.300-.15.600-.26.870-.23.580-.05 1.300.47 1.630a9.530 9.530 0 0 1 3.830 4.780ZM12.500 9a3 3 0 1 1-6 0 3 3 0 0 1 6 0ZM2 20.500a7.500 7.500 0 0 1 15 0c0 .83-.67 1.500-1.500 1.500a.2.200 0 0 1-.2-.16c-.2-.96-.56-1.870-.88-2.540-.1-.2-.38-.13-.38.090v2.110a.5.500 0 0 1-.5.500h-8a.5.500 0 0 1-.5-.5v-2.110c0-.22-.28-.3-.38-.1-.32.670-.67 1.580-.88 2.540a.2.200 0 0 1-.2.170C2.670 22 2 21.330 2 20.500Z"/></svg>
      <!-- search -->
      <div class="abs" style="left:351px;top:9px;width:260px;height:33.500px;border-radius:9px;background:#2c2d32;border:1px solid #44454c"></div>
      <div class="abs" style="left:360.500px;top:8.500px;line-height:34px;font-size:14.600px;color:#a6a7af;white-space:nowrap;letter-spacing:-0.250px">Search Djmixxxx</div>
      <svg class="abs" style="left:589px;top:17px" width="17" height="17" viewBox="0 0 17 17"><circle cx="6.800" cy="6.800" r="5.300" fill="none" stroke="#c3c4ca" stroke-width="1.500"/><path stroke="#c3c4ca" stroke-width="1.600" stroke-linecap="round" d="M10.800 10.800 14.600 14.600"/></svg>
    </div>

    <div id="hover"></div>
    <div id="embed"></div>
    <div class="abs" style="left:93px;top:56.600px;line-height:18px;font-size:12.800px;color:#c9cace;letter-spacing:-0.350px;white-space:nowrap">SoundCloud</div>
    <div class="abs" style="left:93px;top:84px;line-height:22px;font-size:15.600px;font-weight:bold;color:#fbfbfc;letter-spacing:-0.550px;white-space:nowrap">T00TH</div>
    <div class="abs" style="left:93px;top:114.300px;line-height:24px;font-size:17.600px;font-weight:bold;color:#6fa1e8;white-space:nowrap;transform:scaleX(.91);transform-origin:0 50%">Unbeatable</div>
    <div id="card">
      <div style="left:43px;top:11.24px">Why is this step needed?</div>
      <div class="j" style="top:47.14px">We detected unusual activity from your</div>
      <div class="j" style="top:68.54px">device or network. Reasons may</div>
      <div style="left:43px;top:89.84px">include:</div>
      <div class="dot" style="top:119.30px"></div>
      <div class="b" style="top:111.24px">Rapid taps or clicks</div>
      <div class="dot" style="top:140.70px"></div>
      <div class="b" style="top:132.64px">JavaScript disabled or not working</div>
      <div class="dot" style="top:162.00px"></div>
      <div class="jb" style="top:153.94px">Automated (bot) activity on your</div>
      <div class="b" style="top:175.24px;letter-spacing:0.035px">network (IP 31.127.221.220)</div>
      <div class="dot" style="top:204.70px"></div>
      <div class="b" style="top:196.64px;letter-spacing:0.035px">Use of developer or inspection tools</div>
      <div style="left:43px;top:237.44px">Need help? Submit feedback.</div>
      <div style="left:43px;top:271.74px;font-size:14.800px;letter-spacing:0">ID: 54d050dc-25d4-7df8-873e-</div>
      <div style="left:43px;top:288.84px;font-size:14.800px;letter-spacing:0.360px">38be1ff639a2</div>
    </div>
    <!-- scrollbar thumb -->
    <div class="abs" style="left:610px;top:469px;width:9px;height:34px;border-radius:4.500px;background:#83848e"></div>
    <!-- date divider -->
    <div class="abs" style="left:16px;top:521.500px;width:576px;height:1px;background:#3e3f45"></div>
    <div class="abs" style="left:257.500px;top:512.500px;width:92px;height:20px;background:#323338;text-align:center;line-height:20px;font-size:13px;font-weight:bold;color:#b0b1b8;white-space:nowrap"><span style="display:inline-block;transform:scaleX(.925)">31 March 2026</span></div>
    <!-- input -->
    <div class="abs" style="left:8px;top:533.500px;width:607px;height:61.500px;border-radius:9px;background:#393a41;border:1px solid #404148"></div>
    <svg class="abs" style="left:28px;top:555px" width="19" height="19" viewBox="0 0 19 19"><path fill="none" stroke="#cfd0d5" stroke-width="1.900" stroke-linecap="round" d="M9.500 1v17M1 9.500h17"/></svg>
    <div class="abs" style="left:75.500px;top:554px;line-height:24px;font-size:16.800px;color:#6c6d77;white-space:nowrap;letter-spacing:-0.150px">Message #self-promo</div>

    <!-- input icons (coords relative to #chat inner origin 401,36) -->
    <svg class="abs" style="left:403.500px;top:555px" width="19" height="19" viewBox="0 0 19 19"><path fill="#c4c5cb" fill-rule="evenodd" d="M5.600 1.200c-1.600 0-2.800 1.200-2.800 2.700 0 .5.100 1 .4 1.400H2a1.200 1.200 0 0 0-1.200 1.200v2.200c0 .3.300.6.600.6h7.200V5.500h1.800v3.800h7.200c.3 0 .6-.3.600-.6V6.500A1.200 1.200 0 0 0 17 5.300h-1.200c.3-.4.400-.9.400-1.400 0-1.500-1.200-2.700-2.800-2.700-1.500 0-2.700.9-3.900 2.700C8.300 2.100 7.100 1.200 5.600 1.200ZM8.300 5.300H5.700a1.200 1.200 0 1 1 0-2.400c.9 0 1.700.7 2.600 2.400Zm2.400 0h2.600a1.200 1.200 0 1 0 0-2.400c-.9 0-1.700.7-2.600 2.400ZM2 10.900h6.600v7.300H4.200A2.200 2.200 0 0 1 2 16Zm8.400 0H17V16a2.200 2.200 0 0 1-2.200 2.200h-4.400Z"/></svg>
    <svg class="abs" style="left:446px;top:555px" width="19" height="19" viewBox="0 0 19 19"><rect x=".5" y=".5" width="18" height="18" rx="3" fill="#c4c5cb"/><text x="9.500" y="12.900" text-anchor="middle" font-family="Liberation Sans, sans-serif" font-weight="bold" font-size="8.600" fill="#393a41" letter-spacing="-0.300">GIF</text></svg>
    <svg class="abs" style="left:488.500px;top:555px" width="19" height="19" viewBox="0 0 19 19"><path fill="#c4c5cb" fill-rule="evenodd" d="M3.500.5h12a3 3 0 0 1 3 3v7.200h-3.300a4.500 4.500 0 0 0-4.500 4.500v3.300H3.500a3 3 0 0 1-3-3v-12a3 3 0 0 1 3-3ZM5.200 5.300a1 1 0 1 0 2 0 1 1 0 0 0-2 0Zm6.600 0a1 1 0 1 0 2 0 1 1 0 0 0-2 0ZM4.400 8.300c-.5.300-.6.900-.3 1.300 1.200 1.700 3.100 2.700 5.400 2.700 2.200 0 4.200-1 5.400-2.700.3-.4.200-1-.3-1.300-.4-.3-1-.2-1.300.2-.8 1.200-2.200 1.900-3.800 1.900-1.700 0-3-.7-3.800-1.900-.3-.4-.9-.5-1.300-.2Z"/><path fill="#c4c5cb" d="M12.300 18.300v-3.100a2.900 2.900 0 0 1 2.900-2.900h3.100c-.2.500-.5 1-.9 1.400l-3.700 3.700c-.4.400-.9.700-1.400.9Z"/></svg>
    <svg class="abs" style="left:531.500px;top:555px" width="19" height="19" viewBox="0 0 19 19"><path fill="#c4c5cb" fill-rule="evenodd" d="M9.500.4a9.100 9.100 0 1 0 0 18.200A9.100 9.100 0 0 0 9.500.4ZM5.300 6.900a1.300 1.300 0 1 0 2.600 0 1.300 1.300 0 0 0-2.600 0Zm5.800 0a1.300 1.300 0 1 0 2.600 0 1.300 1.300 0 0 0-2.600 0ZM5 10.500c-.4.300-.5.900-.2 1.300 1 1.500 2.700 2.400 4.700 2.400s3.700-.9 4.700-2.400c.3-.4.200-1-.2-1.300-.4-.3-1-.2-1.300.2-.7 1-1.800 1.600-3.200 1.600s-2.500-.6-3.200-1.600c-.3-.4-.9-.5-1.300-.2Z"/></svg>
    <svg class="abs" style="left:574.500px;top:555px" width="19" height="19" viewBox="0 0 19 19"><g fill="#c4c5cb"><rect x="1.600" y="1.200" width="7" height="7" rx="1.600" transform="rotate(12 5.100 4.700)"/><path d="M13.300 1.200c.4-.7 1.400-.7 1.800 0l2.700 5.100c.4.700-.1 1.600-.9 1.600h-5.400c-.8 0-1.300-.9-.9-1.600Z"/><path d="M5.100 10.300l1.500.7 1.600-.2.500 1.500 1.200 1.100-.9 1.300.1 1.600-1.600.4-1.100 1.200-1.300-.9-1.600.1-.4-1.600-1.200-1.100.9-1.300-.1-1.600 1.600-.4Z" transform="translate(.1 .2)"/><path d="M14.200 10.200c.2 2.300 1.500 3.600 3.800 3.800-2.300.2-3.600 1.500-3.800 3.800-.2-2.300-1.500-3.600-3.800-3.800 2.300-.2 3.600-1.500 3.800-3.800Z"/></g></svg>
  </div>
</div>
</body>
</html>
